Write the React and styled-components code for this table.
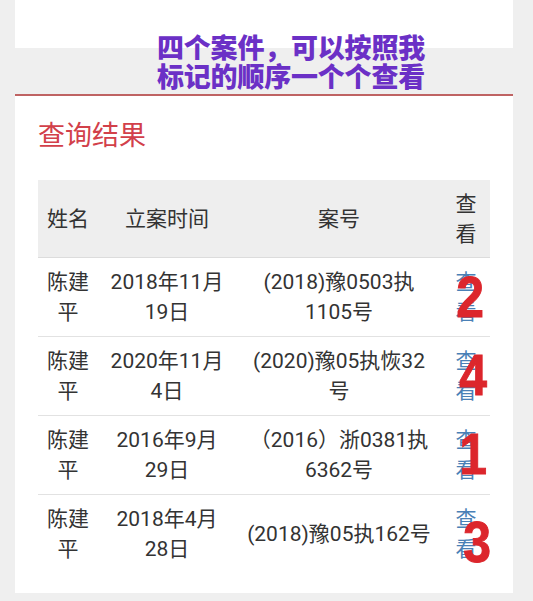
import React from "react";
import styled, { createGlobalStyle } from "styled-components";

const GlobalStyle = createGlobalStyle`
  html, body { margin: 0; padding: 0; background: #efefef; }
  body {
    font-family: Roboto, "Noto Sans CJK SC", "Noto Sans", sans-serif;
    color: #333;
  }
`;

const Page = styled.div`
  position: relative;
  width: 533px;
  height: 601px;
  padding: 0 20px 0 15px;
  box-sizing: border-box;
  overflow: hidden;
`;

const TopCard = styled.div`
  height: 48px;
  background: #fff;
`;

const Band = styled.div`
  height: 46px;
`;

const ResultCard = styled.section`
  background: #fff;
  border-top: 2px solid #bf6363;
  padding: 22px 23px 20px;
  height: 499px;
  box-sizing: border-box;
`;

const Title = styled.h2`
  margin: 0;
  font-size: 27px;
  line-height: 36px;
  font-weight: 400;
  color: #d2404a;
`;

const Table = styled.table`
  margin-top: 26px;
  width: 452px;
  table-layout: fixed;
  border-collapse: collapse;
  font-size: 21px;
  line-height: 30px;
`;

const Col = styled.col`
  width: ${(p) => p.$w}px;
`;

const HeadRow = styled.tr`
  background: #eeeeee;
  border-bottom: 1px solid #dcdcdc;
`;

const Th = styled.th`
  font-weight: 400;
  color: #333;
  padding: 9px 8px 8px;
  text-align: center;
  vertical-align: middle;
`;

const Row = styled.tr`
  border-bottom: ${(p) => (p.$last ? "none" : "1px solid #e2e2e2")};
`;

const Td = styled.td`
  padding: 9px 8px 9px;
  text-align: center;
  vertical-align: middle;
  color: #333;
`;

const ViewCell = styled.td`
  position: relative;
  padding: 9px 8px;
  text-align: center;
  vertical-align: middle;
`;

const ViewLink = styled.a`
  color: #4a80b6;
  text-decoration: none;
  display: inline-block;
  width: 21px;
  word-break: break-all;
`;

const Mark = styled.span`
  position: absolute;
  left: 50%;
  top: 50%;
  transform: translate(calc(-50% + ${(p) => p.$dx}px), calc(-50% + ${(p) => p.$dy}px)) scaleX(0.86);
  font-family: "Liberation Sans", Arial, sans-serif;
  font-weight: 700;
  font-size: 58px;
  line-height: 1;
  color: #dc262c;
  -webkit-text-stroke: 1px #dc262c;
  pointer-events: none;
`;

const Annotation = styled.div`
  position: absolute;
  top: 32px;
  left: 157px;
  font-family: "Noto Sans CJK SC", sans-serif;
  font-weight: 900;
  font-size: 27px;
  line-height: 29px;
  color: #6b30c6;
  letter-spacing: -0.2px;
`;

const rows = [
  { name: ["陈建", "平"], date: ["2018年11月", "19日"], no: ["(2018)豫0503执", "1105号"], mark: "2", dx: 4, dy: 0 },
  { name: ["陈建", "平"], date: ["2020年11月", "4日"], no: ["(2020)豫05执恢32", "号"], mark: "4", dx: 7, dy: -1 },
  { name: ["陈建", "平"], date: ["2016年9月", "29日"], no: ["（2016）浙0381执", "6362号"], mark: "1", dx: 7, dy: -1 },
  { name: ["陈建", "平"], date: ["2018年4月", "28日"], no: ["(2018)豫05执162号"], mark: "3", dx: 11, dy: 8 },
];

const Lines = ({ parts }) =>
  parts.map((t, i) => (
    <React.Fragment key={i}>
      {i > 0 && <br />}
      {t}
    </React.Fragment>
  ));

export default function App() {
  return (
    <>
      <GlobalStyle />
      <Page>
        <TopCard />
        <Band />
        <ResultCard>
          <Title>查询结果</Title>
          <Table>
            <colgroup>
              <Col $w={60} />
              <Col $w={138} />
              <Col $w={206} />
              <Col $w={48} />
            </colgroup>
            <thead>
              <HeadRow>
                <Th>姓名</Th>
                <Th>立案时间</Th>
                <Th>案号</Th>
                <Th>
                  查<br />看
                </Th>
              </HeadRow>
            </thead>
            <tbody>
              {rows.map((r, i) => (
                <Row key={i} $last={i === rows.length - 1}>
                  <Td>
                    <Lines parts={r.name} />
                  </Td>
                  <Td>
                    <Lines parts={r.date} />
                  </Td>
                  <Td>
                    <Lines parts={r.no} />
                  </Td>
                  <ViewCell>
                    <ViewLink href="#">查看</ViewLink>
                    <Mark $dx={r.dx} $dy={r.dy}>{r.mark}</Mark>
                  </ViewCell>
                </Row>
              ))}
            </tbody>
          </Table>
        </ResultCard>
        <Annotation>
          四个案件，可以按照我
          <br />
          标记的顺序一个个查看
        </Annotation>
      </Page>
    </>
  );
}
